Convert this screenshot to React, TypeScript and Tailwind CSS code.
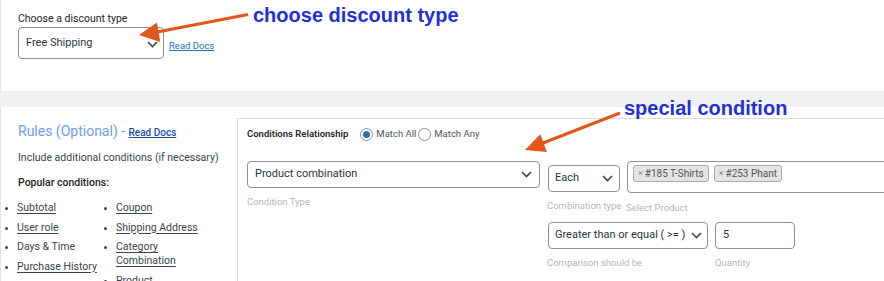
import React from 'react';

const Chevron = ({ className = '' }: { className?: string }) => (
  <svg width="11" height="7" viewBox="0 0 11 7" className={className}>
    <path d="M1 1l4.5 4.5L10 1" fill="none" stroke="#3c434a" strokeWidth="1.6" />
  </svg>
);

const Bullet = () => <span className="mt-[6px] h-[3px] w-[3px] shrink-0 rounded-full bg-[#3c434a]" />;

const Item = ({ label, link = true }: { label: string; link?: boolean }) => (
  <li className="flex gap-[9px] mb-[5.5px] leading-[14px]">
    <Bullet />
    <span className={link ? 'underline underline-offset-[2px]' : ''}>{label}</span>
  </li>
);

const Tag = ({ text }: { text: string }) => (
  <span className="flex h-[17px] items-center gap-[2px] rounded-[3px] border border-[#aaaaaa] bg-[#e4e4e4] px-[4px] text-[10px] text-[#555]">
    <span className="text-[9px] text-[#888]">×</span>
    {text}
  </span>
);

export default function App() {
  return (
    <div className="relative h-[281px] w-[884px] overflow-hidden bg-[#f0f0f1] font-['Roboto',sans-serif] text-[#1d2327]">
      {/* discount type panel */}
      <div className="h-[91px] border-l border-[#e2e4e7] bg-white pl-[17px] pt-[12px]">
        <div className="text-[10.5px] leading-[14px]">Choose a discount type</div>
        <div className="mt-[1px] flex items-end gap-[5px]">
          <div className="flex h-[32px] w-[146px] items-center justify-between rounded-[4px] border border-[#8c8f94] pl-[7px] pr-[5px] text-[11px] text-[#2c3338]">
            Free Shipping
            <Chevron className="mt-[3px]" />
          </div>
          <a className="mb-[7px] text-[9.5px] leading-[12px] text-[#2271b1] underline">Read Docs</a>
        </div>
      </div>

      <div className="h-[16px]" />

      {/* rules panel */}
      <div className="flex h-[174px] border-l border-[#e2e4e7] bg-white">
        <div className="w-[236px] shrink-0 pt-[16px] text-[10.5px] text-[#3c434a]">
          <div className="pl-[17px] text-[14px] leading-[16px] text-[#6e9df0]">
            Rules (Optional) -{' '}
            <a className="text-[10px] font-medium text-[#1b4f9e] underline">Read Docs</a>
          </div>
          <div className="mt-[10px] pl-[17px] leading-[14px]">Include additional conditions (if necessary)</div>
          <div className="mt-[11px] pl-[17px] font-medium leading-[14px] text-[#1d2327]">Popular conditions:</div>
          <div className="mt-[11px] grid grid-cols-[99px_1fr] pl-[4px]">
            <ul>
              <Item label="Subtotal" />
              <Item label="User role" />
              <Item label="Days & Time" link={false} />
              <Item label="Purchase History" />
              <Item label="Payment Method" />
            </ul>
            <ul className="pr-[26px]">
              <Item label="Coupon" />
              <Item label="Shipping Address" />
              <Item label="Category Combination" />
              <Item label="Product" />
            </ul>
          </div>
        </div>

        <div className="mt-[11px] flex-1 border-l border-t border-[#dcdcde] pl-[9px] pt-[8px]">
          <div className="flex h-[14px] items-center text-[9.5px]">
            <span className="font-semibold text-[#1d2327]">Conditions Relationship</span>
            <span className="ml-[12px] flex h-[13px] w-[13px] items-center justify-center rounded-full border border-[#8c8f94]">
              <span className="h-[7px] w-[7px] rounded-full bg-[#2271b1]" />
            </span>
            <span className="ml-[3px] text-[#50575e]">Match All</span>
            <span className="ml-[2px] h-[13px] w-[13px] rounded-full border border-[#8c8f94]" />
            <span className="ml-[3px] text-[#50575e]">Match Any</span>
          </div>

          <div className="mt-[20px] flex items-start">
            <div className="w-[293px] shrink-0">
              <div className="flex h-[27px] items-center justify-between rounded-[4px] border border-[#8c8f94] pl-[7px] pr-[7px] text-[11px] text-[#2c3338]">
                Product combination
                <Chevron />
              </div>
              <div className="mt-[8px] text-[9.5px] leading-[12px] text-[#b5b5b5]">Condition Type</div>
            </div>

            <div className="ml-[7px] flex-1">
              <div className="flex items-start">
                <div className="w-[79px] shrink-0 pt-[4px] pl-[1px]">
                  <div className="flex h-[27px] w-[72px] items-center justify-between rounded-[4px] border border-[#8c8f94] pl-[6px] pr-[6px] text-[11px] text-[#2c3338]">
                    Each
                    <Chevron />
                  </div>
                  <div className="mt-[8px] -ml-[1px] whitespace-nowrap text-[9.5px] leading-[12px] text-[#b5b5b5]">Combination type</div>
                </div>
                <div className="ml-[1px] flex-1">
                  <div className="flex h-[32px] w-[300px] items-start gap-[5px] rounded-l-[4px] border border-[#8c8f94] pl-[5px] pt-[3px]">
                    <Tag text="#185 T-Shirts" />
                    <Tag text="#253 Phant" />
                  </div>
                  <div className="mt-[9px] -ml-[1px] text-[9.5px] leading-[12px] text-[#b5b5b5]">Select Product</div>
                </div>
              </div>

              <div className="mt-[8px] flex items-start pl-[1px]">
                <div className="w-[167px] shrink-0">
                  <div className="flex h-[27px] w-[160px] items-center justify-between whitespace-nowrap rounded-[4px] border border-[#8c8f94] pl-[6px] pr-[5px] text-[11px] text-[#2c3338]">
                    Greater than or equal ( &gt;= )
                    <Chevron />
                  </div>
                  <div className="mt-[8px] -ml-[1px] text-[9.5px] leading-[12px] text-[#b5b5b5]">Comparison should be</div>
                </div>
                <div>
                  <div className="flex h-[27px] w-[80px] items-center rounded-[4px] border border-[#8c8f94] pl-[7px] text-[11px] text-[#2c3338]">
                    5
                  </div>
                  <div className="mt-[8px] text-[9.5px] leading-[12px] text-[#b5b5b5]">Quantity</div>
                </div>
              </div>
            </div>
          </div>
        </div>
      </div>

      {/* annotations */}
      <svg className="pointer-events-none absolute left-0 top-0" width="884" height="281">
        <line x1="248" y1="14.5" x2="152" y2="33" stroke="#e2561b" strokeWidth="3" />
        <polygon points="139,35 160.3,42 156.9,22.4" fill="#e2561b" />
        <line x1="620" y1="113" x2="538" y2="145" stroke="#e2561b" strokeWidth="3" />
        <polygon points="525,150 546.9,152 540.3,134.3" fill="#e2561b" />
      </svg>
      <div className="absolute left-[253px] top-[3px] font-['Liberation_Sans',Arial,sans-serif] text-[20px] font-bold leading-[24px] text-[#2330d8]">
        choose discount type
      </div>
      <div className="absolute left-[624px] top-[96px] font-['Liberation_Sans',Arial,sans-serif] text-[20px] font-bold leading-[24px] text-[#2330d8]">
        special condition
      </div>
    </div>
  );
}
